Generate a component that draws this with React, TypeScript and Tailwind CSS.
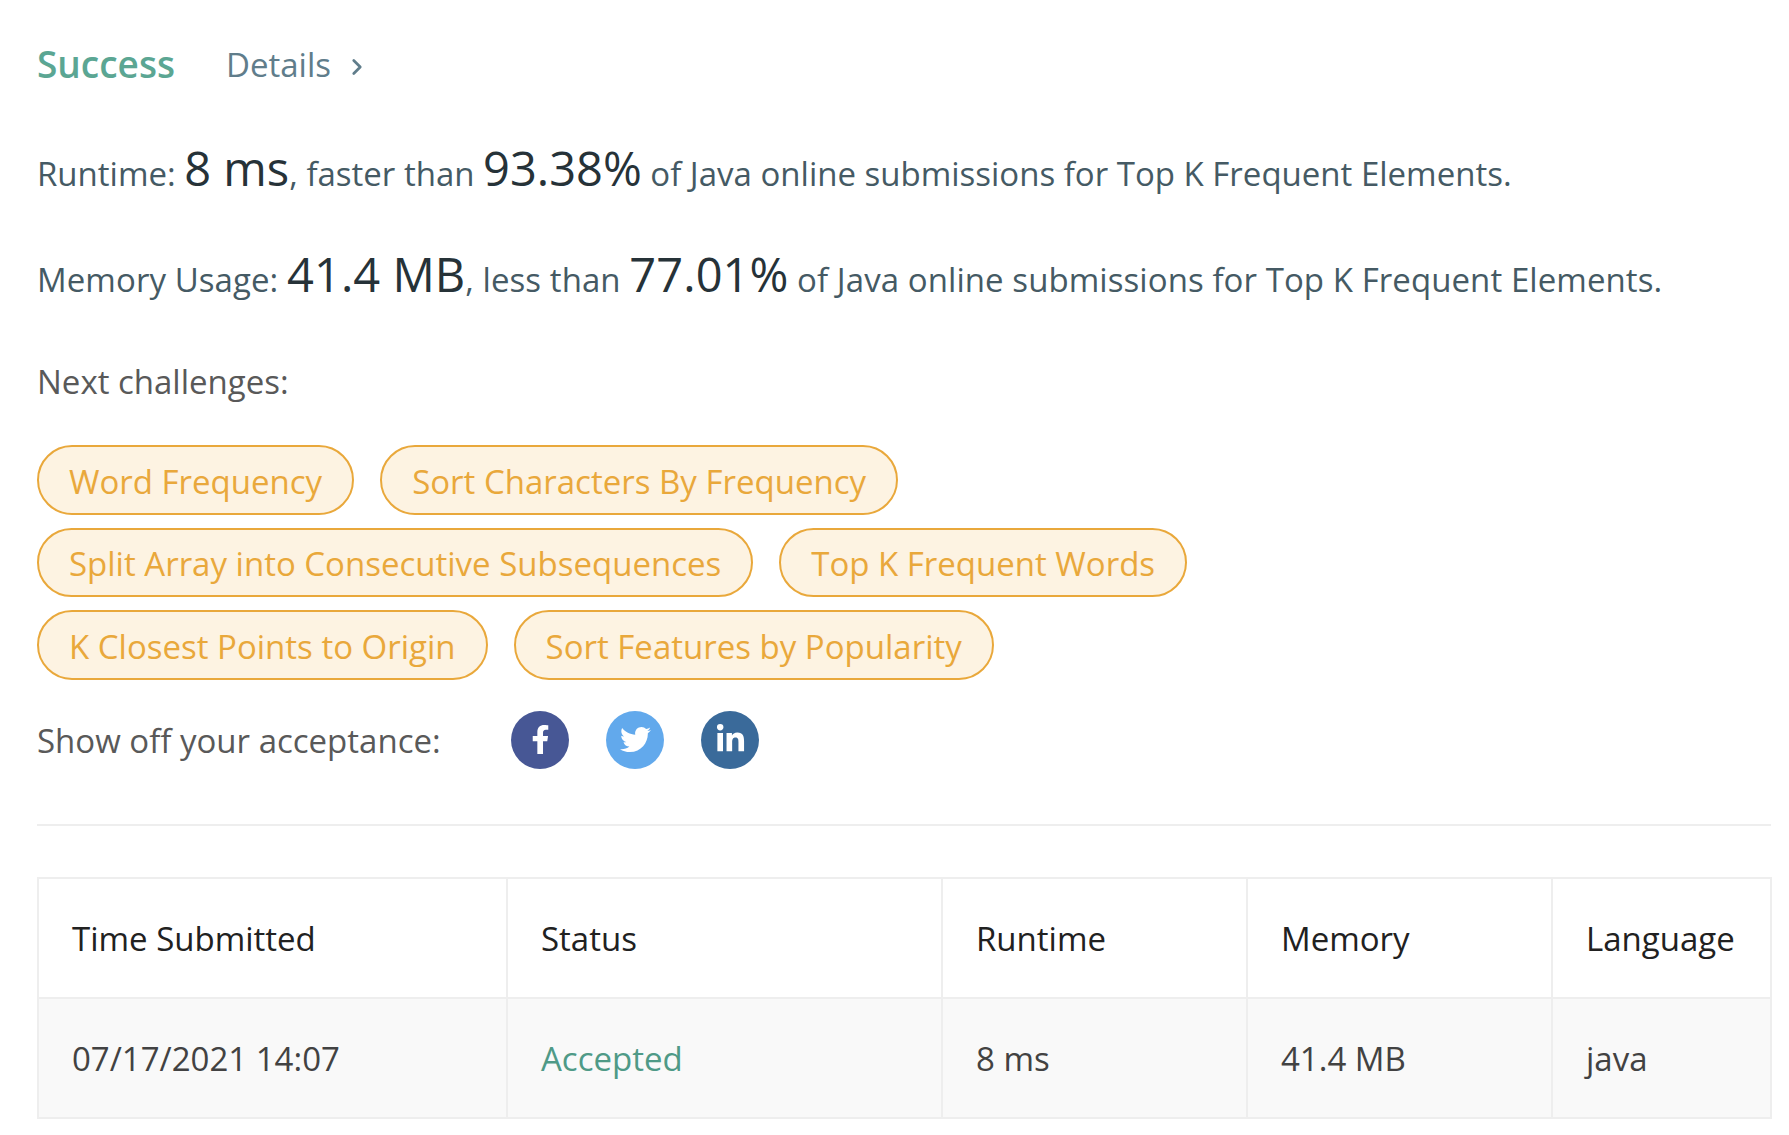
import React from 'react';
import { FaFacebookF, FaTwitter, FaLinkedinIn } from 'react-icons/fa';
import { ChevronRight } from 'lucide-react';

const CHALLENGES = [
  'Word Frequency',
  'Sort Characters By Frequency',
  'Split Array into Consecutive Subsequences',
  'Top K Frequent Words',
  'K Closest Points to Origin',
  'Sort Features by Popularity',
];

const App: React.FC = () => {
  return (
    <div className="min-h-screen bg-white pl-[37px] pr-[18px] pt-[38px] font-['Open_Sans',sans-serif] text-[33px] text-[#546e7a]">
      {/* Result header */}
      <div className="flex h-[52px] items-center">
        <span className="w-[189px] text-[37px] font-semibold text-[#5ba693]">Success</span>
        <span className="mt-[1px] text-[33px] text-[#607d8b]">Details</span>
        <ChevronRight size={26} strokeWidth={2.5} className="ml-[13px] mt-[5px] text-[#607d8b]" />
      </div>

      {/* Stats */}
      <p className="mt-[44px] h-[68px] leading-[68px] text-[#455a64]">
        Runtime: <span className="text-[47px] text-[#263238]">8 ms</span>, faster than{' '}
        <span className="text-[47px] text-[#263238]">93.38%</span> of Java online submissions for Top K Frequent Elements.
      </p>
      <p className="mt-[38px] h-[68px] leading-[68px] tracking-[0.07px] text-[#455a64]">
        Memory Usage: <span className="text-[47px] text-[#263238]">41.4 MB</span>, less than{' '}
        <span className="text-[47px] text-[#263238]">77.01%</span> of Java online submissions for Top K Frequent Elements.
      </p>

      <p className="mt-[51px] h-[46px] leading-[46px] text-[#595959]">Next challenges:</p>

      {/* Next challenges */}
      <div className="mt-[40px] flex max-w-[1200px] flex-wrap gap-x-[26px] gap-y-[13px]">
        {CHALLENGES.map((name) => (
          <span
            key={name}
            className="flex h-[69.5px] items-center rounded-full border-2 border-[#e9a83b] bg-[#fdf3e2] px-[30px] pt-[3px] text-[#e9a83b]"
          >
            {name}
          </span>
        ))}
      </div>

      {/* Share */}
      <div className="mt-[31px] flex h-[58px] items-center">
        <span className="w-[474px] pt-[3px] text-[#595959]">Show off your acceptance:</span>
        <div className="flex gap-[37px]">
          <span className="flex size-[58px] items-center justify-center rounded-full bg-[#475795] text-white">
            <FaFacebookF size={29} />
          </span>
          <span className="flex size-[58px] items-center justify-center rounded-full bg-[#62a9ec] text-white">
            <FaTwitter size={31} />
          </span>
          <span className="flex size-[58px] items-center justify-center rounded-full bg-[#3a6a9a] text-white">
            <FaLinkedinIn size={31} />
          </span>
        </div>
      </div>

      <div className="mt-[55px] h-[2px] bg-[#eeeeee]" />

      {/* Submission table */}
      <table className="mt-[51px] w-[1733px] table-fixed border-collapse border-2 border-[#eeeeee]">
        <colgroup>
          <col className="w-[469px]" />
          <col className="w-[435px]" />
          <col className="w-[305px]" />
          <col className="w-[305px]" />
          <col className="w-[219px]" />
        </colgroup>
        <thead>
          <tr className="h-[120px] text-[#212121]">
            {['Time Submitted', 'Status', 'Runtime', 'Memory', 'Language'].map((h) => (
              <th key={h} className="border-2 border-[#eeeeee] pl-[33px] pt-[3px] text-left font-normal">
                {h}
              </th>
            ))}
          </tr>
        </thead>
        <tbody>
          <tr className="h-[120px] bg-[#f9f9f9] text-[#424242]">
            <td className="border-2 border-[#eeeeee] pl-[33px] pt-[3px]">07/17/2021 14:07</td>
            <td className="border-2 border-[#eeeeee] pl-[33px] pt-[3px] text-[#4f9a87]">Accepted</td>
            <td className="border-2 border-[#eeeeee] pl-[33px] pt-[3px]">8 ms</td>
            <td className="border-2 border-[#eeeeee] pl-[33px] pt-[3px]">41.4 MB</td>
            <td className="border-2 border-[#eeeeee] pl-[33px] pt-[3px]">java</td>
          </tr>
        </tbody>
      </table>
    </div>
  );
};

export default App;
